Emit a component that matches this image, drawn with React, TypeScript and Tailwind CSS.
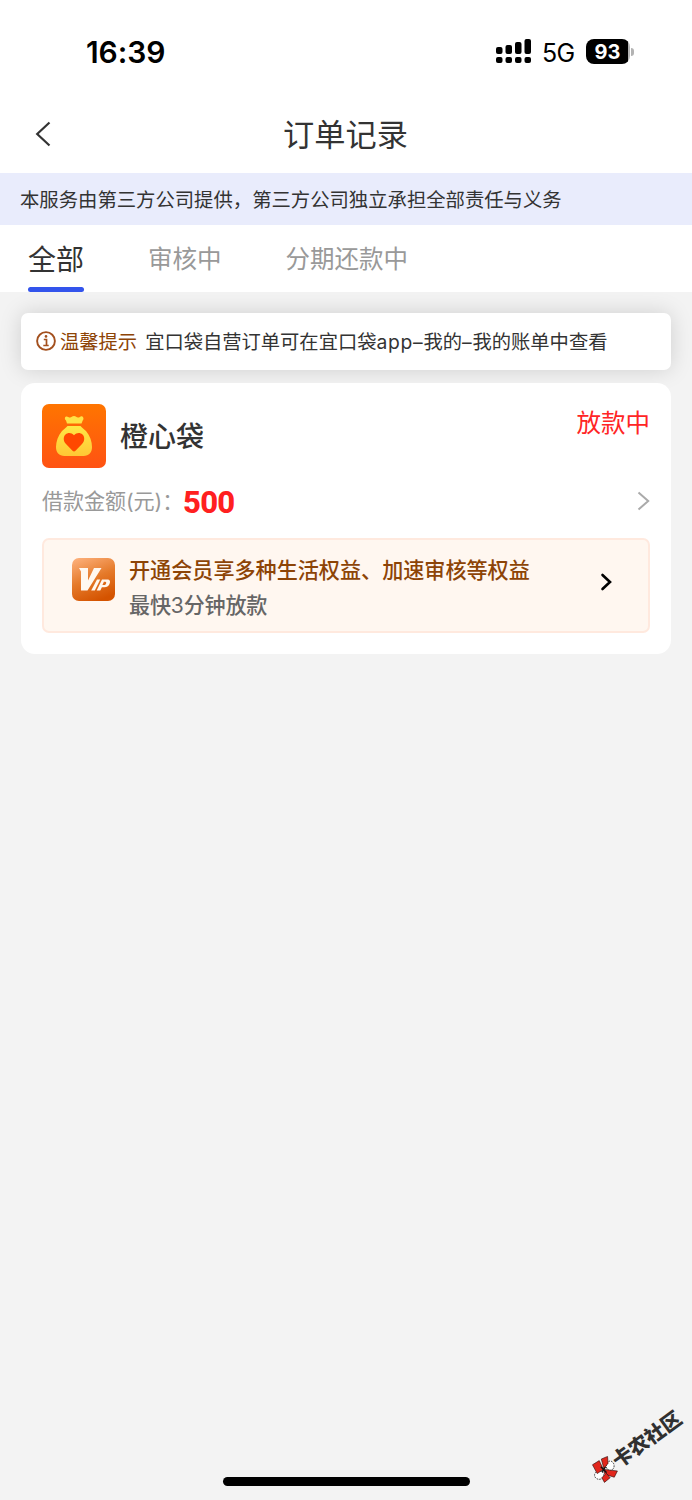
import { useState } from 'react';

const tabs = ['全部', '审核中', '分期还款中'];

const signalBars = [
  { x: 0, y: 8, h: 7 },
  { x: 9.5, y: 6, h: 9 },
  { x: 19, y: 3, h: 12 },
  { x: 28.5, y: 0, h: 15 },
];

const StatusBar = () => (
  <div className="flex h-[95px] items-start justify-between pl-[86px] pr-[58px] pt-[36px] text-black">
    <span className="text-[30px] font-semibold leading-[32px] tracking-[-0.1px]">16:39</span>
    <div className="flex items-center pt-px">
      <svg width="35" height="25" viewBox="0 0 35 25">
        {signalBars.map((bar) => (
          <g key={bar.x}>
            <rect x={bar.x} y={bar.y} width="6.5" height={bar.h} rx="2" />
            <rect x={bar.x} y="18" width="6.5" height="6" rx="2" />
          </g>
        ))}
      </svg>
      <span className="ml-[11px] w-[33px] whitespace-nowrap pt-[3px] text-[25px] leading-[26px] tracking-[-0.6px]">5G</span>
      <div className="ml-[11px] flex items-center">
        <div className="flex h-[25px] w-[44px] items-center justify-center rounded-[8px] bg-[linear-gradient(90deg,#000_42px,#b3b3b3_42px)] pr-px text-[20px] font-bold leading-none text-white">
          93
        </div>
        <div className="ml-px h-[8px] w-[3px] rounded-r-full bg-[#b3b3b3]" />
      </div>
    </div>
  </div>
);

const MoneyBagIcon = () => (
  <svg width="64" height="64" viewBox="0 0 64 64">
    <defs>
      <linearGradient id="bagBg" x1="0" y1="0" x2="0" y2="1">
        <stop offset="0" stopColor="#ff7500" />
        <stop offset="1" stopColor="#ff5213" />
      </linearGradient>
      <linearGradient id="bagFill" x1="0" y1="0" x2="0" y2="1">
        <stop offset="0" stopColor="#ffe845" />
        <stop offset="1" stopColor="#ffc735" />
      </linearGradient>
    </defs>
    <rect width="64" height="64" rx="7" fill="url(#bagBg)" />
    <path d="M25 19.500h14.500l1.200-3c1.300-1 1-3.500-.7-4.200-1.700-.5-2.500 1.500-4 1.300-1.500-.2-2-1.600-4-1.600s-2.500 1.500-4 1.500-2.500-1.500-4-1c-1.600.7-1.500 3 0 4z" fill="#ffe246" />
    <path d="M25.500 22h13c1.500 2 3.500 3 5.500 5 4 4.500 6 11 6 16 0 5.500-3 9-8.500 9h-19C17 52 14 48.500 14 43c0-5 2-11.500 6-16 2-2 4-3 5.500-5z" fill="url(#bagFill)" />
    <path d="M32 47.500c-.5 0-1-.4-1.500-.8L24 40c-3.200-3.300-2.600-7.500-.5-9.500 2.500-2.300 6-2 8.500.8 2.500-2.800 6-3.100 8.500-.8 2.100 2 2.700 6.200-.5 9.500l-6.500 6.700c-.5.5-1 .8-1.500.8z" fill="#ff4800" />
  </svg>
);

const VipIcon = () => (
  <svg width="43" height="43" viewBox="0 0 43 43" className="shrink-0">
    <defs>
      <linearGradient id="vipBg" x1="0.2" y1="0" x2="0.6" y2="1">
        <stop offset="0" stopColor="#fbac75" />
        <stop offset="0.5" stopColor="#e57a2a" />
        <stop offset="1" stopColor="#d45300" />
      </linearGradient>
    </defs>
    <rect width="43" height="43" rx="7" fill="url(#vipBg)" />
    <g fill="#fff8f0">
      <path d="M7 10h9v12.500L22 10h7.500L15.500 32.500H9V13.500z" />
      <path d="M25 21.500h3.200L22.800 32.500h-3.600z" />
      <path fillRule="evenodd" d="M30 21.500h5c3 0 3.700 2 2.500 4.500-1 2.400-2.800 3.300-5 3.300h-2.600L28.300 32.500h-3.600zM31.900 23.700l-1.500 3.400h2c1.700 0 2.600-3.400.9-3.400z" />
    </g>
  </svg>
);

const Watermark = () => (
  <div className="absolute bottom-[15px] right-[2px] flex h-[78px] w-[108px] items-center justify-center">
    <div className="flex -rotate-[36deg] items-center">
      <svg width="27" height="27" viewBox="0 0 26 26" className="mr-[-2px] shrink-0 rotate-[36deg]">
        <g fill="#fff" stroke="#111" strokeWidth="0.8" strokeDasharray="1.500 1">
          <ellipse cx="18" cy="9.500" rx="3.800" ry="4.500" />
          <ellipse cx="7.500" cy="18.500" rx="4.500" ry="4" />
        </g>
        <g fill="#e1261c" stroke="#2a0f0d" strokeWidth="0.6">
          <path d="M1 8.500L7.500 4.500l4 8.500-6 4z" />
          <path d="M9.500 3l6-2.500L16 7l-4 5.500z" />
          <path d="M12 13l13 1.500-3 6-6.500-2z" />
          <path d="M11.500 13.500l6.500 7.500-5.500 4.500-2.500-4.500 3-3z" />
        </g>
        <path d="M9 10.500l5.500 5.500M13.500 10.500l-3.500 5" stroke="#111" strokeWidth="1.300" />
      </svg>
      <span className="whitespace-nowrap text-[20px] font-black leading-none text-[#303030]">卡农社区</span>
    </div>
  </div>
);

const App: React.FC = () => {
  const [activeTab, setActiveTab] = useState<string>('全部');

  return (
    <div className="relative h-[1500px] w-[692px] overflow-hidden bg-[#f3f3f3] font-[Inter,'Noto_Sans_CJK_SC',sans-serif] text-[#333]">
      <header className="bg-white">
        <StatusBar />
        <div className="grid h-[78px] grid-cols-[1fr_auto_1fr] items-center pl-[35px] pr-[36px]">
          <button type="button" aria-label="返回">
            <svg width="16" height="26" viewBox="0 0 16 26" fill="none" stroke="#333" strokeWidth="2.200">
              <path d="M14.500 1.500L2.200 13l12.300 11.500" />
            </svg>
          </button>
          <h1 className="pt-[3px] text-[31.200px] leading-none">订单记录</h1>
        </div>
      </header>

      <p className="flex h-[52px] items-center whitespace-nowrap bg-[#e9ecfc] pl-[20px] pt-[3px] text-[19.350px]">
        本服务由第三方公司提供，第三方公司独立承担全部责任与义务
      </p>

      <nav className="flex h-[67px] gap-[64px] bg-white pl-[28px]">
        {tabs.map((tab) => (
          <button
            key={tab}
            type="button"
            onClick={() => setActiveTab(tab)}
            className={`flex flex-col justify-between ${
              activeTab === tab ? 'text-[28px] text-[#333]' : 'text-[24.500px] text-[#999]'
            }`}
          >
            <span className="flex h-[62px] items-center pt-[7px]">{tab}</span>
            {activeTab === tab && <span className="h-[5px] w-full rounded-full bg-[#3354ec]" />}
          </button>
        ))}
      </nav>

      <main className="px-[21px] pt-[21px]">
        <div className="flex h-[57px] items-center whitespace-nowrap rounded-[7px] bg-white pl-[15px] text-[19.300px] shadow-[0_0_22px_rgba(0,0,0,0.15)]">
          <svg width="20" height="20" viewBox="0 0 20 20" fill="none" stroke="#a3501e" strokeWidth="1.900" className="-mt-px">
            <circle cx="10" cy="10" r="8.900" />
            <path d="M7.800 8.500h2.700v6M7.300 14.500h5.400" strokeWidth="1.700" />
            <circle cx="10" cy="5.400" r="1.300" fill="#a3501e" stroke="none" />
          </svg>
          <span className="ml-[4px] pt-[2px] text-[#8d4406]">温馨提示</span>
          <span className="ml-[8px] pt-[2px]">
            宜口袋自营订单可在宜口袋<span className="tracking-[0.700px]">app–</span>我的<span className="tracking-[0.900px]">–</span>我的账单中查看
          </span>
        </div>

        <section className="relative mt-[13px] h-[271px] rounded-[14px] bg-white px-[21px] pt-[21px]">
          <div className="flex h-[64px]">
            <MoneyBagIcon />
            <h2 className="ml-[14px] flex items-center pt-[2px] text-[28px] font-medium">橙心袋</h2>
            <span className="ml-auto text-[24.500px] leading-[38px] text-[#ff2525]">放款中</span>
          </div>

          <div className="mt-[15px] flex h-[38px] items-center">
            <span className="w-[141px] whitespace-nowrap text-[21.100px] tracking-[-0.1px] text-[#999]">借款金额(元)：</span>
            <span className="pt-[2px] font-[Roboto] text-[31px] font-extrabold tracking-[-0.7px] text-[#ff2020]">500</span>
            <svg className="mb-[2px] ml-auto" width="13" height="20" viewBox="0 0 13 20" fill="none" stroke="#aaa" strokeWidth="2">
              <path d="M1.500 1.500L11.200 10l-9.700 8.500" />
            </svg>
          </div>

          <div className="mt-[17px] flex h-[95px] items-center rounded-[7px] border-2 border-[#ffe9de] bg-[#fff7f0] pl-[28px] pr-[36px]">
            <div className="-mt-[13px]">
              <VipIcon />
            </div>
            <div className="ml-[14px] flex flex-col whitespace-nowrap pt-[4px] text-[21.100px] font-medium leading-[35px]">
              <span className="text-[#8d4406]">开通会员享多种生活权益、加速审核等权益</span>
              <span className="tracking-[-0.200px] text-[#666]">最快<span className="font-normal">3</span>分钟放款</span>
            </div>
            <svg
              className="mb-[8px] ml-auto"
              width="12"
              height="18"
              viewBox="0 0 12 18"
              fill="none"
              stroke="#000"
              strokeWidth="2.600"
              strokeLinecap="round"
            >
              <path d="M2.500 2l7.500 7-7.500 7" />
            </svg>
          </div>
        </section>
      </main>

      <Watermark />
      <div className="absolute bottom-[14px] left-[223px] h-[9px] w-[247px] rounded-full bg-black" />
    </div>
  );
};

export default App;
